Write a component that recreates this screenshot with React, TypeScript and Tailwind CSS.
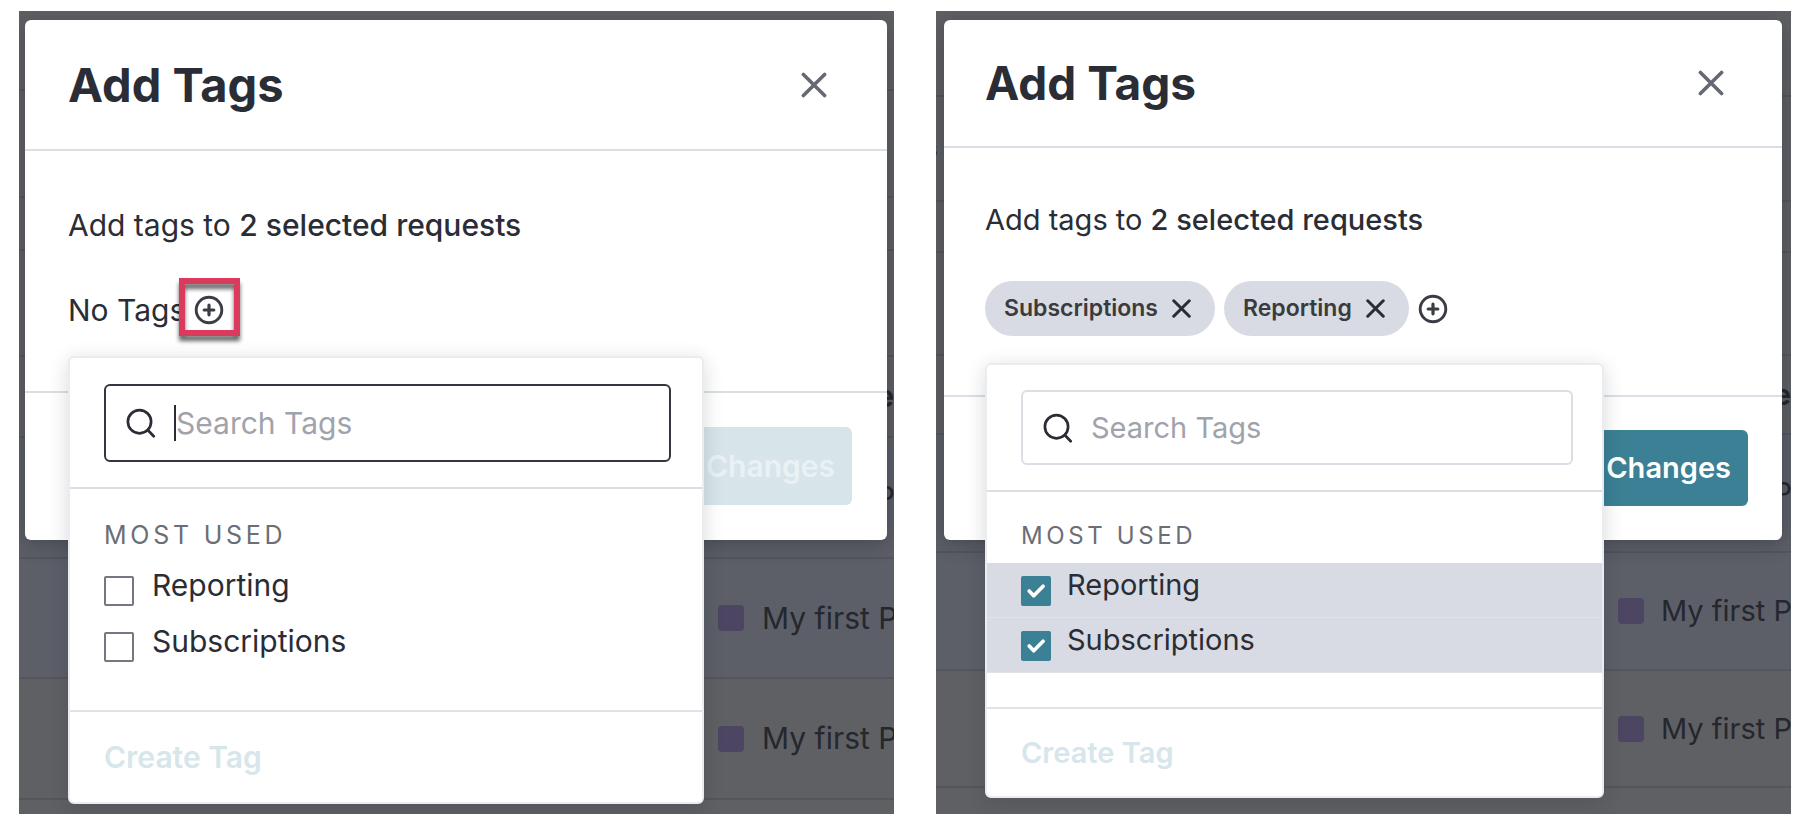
import clsx from "clsx";

type Scale = "large" | "small";

const scales = {
  large: {
    title: "text-[47px] leading-[68px]",
    text: "text-[30px] leading-[45px]",
    label: "mb-2.5 text-[25px] leading-9",
    modal: "mr-[7px] ml-[6px]",
    padX: "px-[43px]",
    header: "h-[131px]",
    body: "gap-[34px] pt-[52px] pb-[53px]",
    tagRow: "h-14",
    footer: "px-[35px] pt-[34px] pb-[35px]",
    button: "h-[78px]",
    popover: "top-[74px] w-[636px]",
    popPad: "pr-[31px] pl-[34px]",
    searchWrap: "pt-[26px] pb-[25px]",
    search: "h-[78px]",
    caret: "ml-[18px]",
    list: "pt-7 pb-[35px]",
    row: "h-14 gap-[18px]",
    create: "h-[90px]",
  },
  small: {
    title: "text-[46px] leading-[66px]",
    text: "text-[29px] leading-[44px]",
    label: "mb-[9px] text-[24px] leading-9",
    modal: "mr-[9px] ml-[8px]",
    padX: "px-[41px]",
    header: "h-[128px]",
    body: "gap-[39px] pt-[50px] pb-[59px]",
    tagRow: "h-[55px]",
    footer: "px-[34px] pt-[33px] pb-[34px]",
    button: "h-[76px]",
    popover: "top-[82px] w-[619px]",
    popPad: "pr-[29px] pl-[34px]",
    searchWrap: "pt-[25px] pb-[25px]",
    search: "h-[75px]",
    caret: "ml-4",
    list: "pt-[26px] pb-[34px]",
    row: "h-[55px] gap-4",
    create: "h-[87px]",
  },
};

function CrossIcon({ size, weight }: { size: number; weight: number }) {
  return (
    <svg width={size} height={size} viewBox="0 0 26 26" fill="none" stroke="currentColor" strokeWidth={weight} strokeLinecap="round" aria-hidden="true">
      <path d="M2.4 2.4 23.6 23.6M23.6 2.4 2.4 23.6" />
    </svg>
  );
}

function PlusCircleIcon() {
  return (
    <svg width="30" height="30" viewBox="0 0 30 30" fill="none" stroke="currentColor" strokeLinecap="round" aria-hidden="true">
      <circle cx="15" cy="15" r="12.8" strokeWidth="2.9" />
      <path d="M15 10.2v9.6M10.2 15h9.6" strokeWidth="3.2" />
    </svg>
  );
}

function SearchIcon() {
  return (
    <svg className="shrink-0" width="30" height="30" viewBox="0 0 30 30" fill="none" stroke="currentColor" strokeWidth="2.7" strokeLinecap="round" aria-hidden="true">
      <circle cx="13.5" cy="13.7" r="11.6" />
      <path d="m22 22.3 5.7 5.9" />
    </svg>
  );
}

function CheckIcon() {
  return (
    <svg className="pointer-events-none col-start-1 row-start-1 hidden peer-checked:block" width="30" height="30" viewBox="0 0 30 30" fill="none" stroke="white" strokeWidth="3.7" strokeLinecap="round" strokeLinejoin="round" aria-hidden="true">
      <path d="m8.2 15 4.5 4.7 9.4-9.5" />
    </svg>
  );
}

function TagOption({ name, checked, scale }: { name: string; checked: boolean; scale: Scale }) {
  const s = scales[scale];
  return (
    <label className={clsx("flex items-start border-b border-transparent bg-clip-padding has-[:checked]:border-[#e0e2e8] has-[:checked]:bg-[#d8dbe3]", s.row, s.popPad)}>
      <span className="mt-[13px] grid">
        <input
          type="checkbox"
          defaultChecked={checked}
          className="peer col-start-1 row-start-1 size-[30px] appearance-none rounded-[2px] border-2 border-[#757881] bg-white checked:border-[#3b8095] checked:bg-[#3b8095]"
        />
        <CheckIcon />
      </span>
      <span className={s.text}>{name}</span>
    </label>
  );
}

function TagPill({ name }: { name: string }) {
  return (
    <span className="flex h-full items-center gap-3.5 rounded-full bg-[#d8dbe3] pr-6 pl-[19px] text-[23px] font-semibold text-[#3b3b3d]">
      {name}
      <button type="button" aria-label={`Remove ${name}`} className="text-[#2a2d35]">
        <CrossIcon size={19} weight={4.2} />
      </button>
    </span>
  );
}

function TagPopover({ scale, selected, focused }: { scale: Scale; selected: string[]; focused: boolean }) {
  const s = scales[scale];
  return (
    <div className={clsx("absolute left-0 z-10 rounded-[6px] border-2 border-[#ebecf1] bg-white shadow-[0_4px_20px_rgba(20,22,30,0.16)]", s.popover)}>
      <div className={clsx("border-b-2 border-[#dbdfe5]", s.searchWrap, s.popPad)}>
        <div className={clsx("flex items-center rounded-[6px] border-2 px-5", s.search, focused ? "border-[#33363e]" : "border-[#dcdee6]")}>
          <SearchIcon />
          <span className={clsx("h-9 w-[2px] shrink-0", s.caret, focused && "bg-[#2a2d35]")} />
          <input
            type="text"
            aria-label="Search Tags"
            placeholder="Search Tags"
            className={clsx("w-full min-w-0 bg-transparent outline-none placeholder:text-[#a0a3ab]", s.text)}
          />
        </div>
      </div>
      <div className={clsx("border-b-2 border-[#dfe2e8]", s.list)}>
        <h3 className={clsx("tracking-[0.15em] text-[#6b6e76] uppercase", s.label, s.popPad)}>Most Used</h3>
        {["Reporting", "Subscriptions"].map((name) => (
          <TagOption key={name} name={name} checked={selected.includes(name)} scale={scale} />
        ))}
      </div>
      <div className={clsx("flex items-center", s.create, s.popPad)}>
        <button type="button" disabled className={clsx("font-semibold text-[#d7e6eb]", s.text)}>Create Tag</button>
      </div>
    </div>
  );
}

interface RequestRow {
  height: string;
  selected?: boolean;
  project?: boolean;
  start?: string;
  end?: string;
}

const largeRows: RequestRow[] = [
  { height: "h-[80px]" },
  { height: "h-[107px]" },
  { height: "h-[53px]" },
  { height: "h-[106px]" },
  { height: "h-[81px]", end: "e" },
  { height: "h-[121px]", selected: true, end: "P" },
  { height: "h-[120px]", selected: true, project: true },
  { height: "h-[121px]", project: true },
  { height: "h-[14px]" },
];

const smallRows: RequestRow[] = [
  { height: "h-[86px]" },
  { height: "h-[105px]", start: "s" },
  { height: "h-[51px]" },
  { height: "h-[103px]" },
  { height: "h-[79px]", end: "e" },
  { height: "h-[118px]", selected: true, end: "P" },
  { height: "h-[118px]", selected: true, project: true },
  { height: "h-[117px]", project: true },
  { height: "h-[26px]" },
];

function RequestList({ rows, scale }: { rows: RequestRow[]; scale: Scale }) {
  const large = scale === "large";
  return (
    <div aria-hidden="true" className="col-start-1 row-start-1 min-w-0 overflow-hidden text-[#25272e]">
      {rows.map((row, i) => (
        <div
          key={i}
          className={clsx(
            "flex items-center overflow-hidden border-b-2 border-[#54565c] whitespace-nowrap last:border-b-0",
            row.height,
            row.selected ? "bg-[#5c5f68]" : "bg-[#5f6064]",
            scales[scale].text,
          )}
        >
          {row.start && <span className="-ml-[11px] text-[23px] font-semibold">{row.start}</span>}
          {row.end && <span className={clsx("ml-auto", row.end === "e" ? "font-bold" : "-mr-px")}>{row.end}</span>}
          {row.project && (
            <span className={clsx("flex items-center", large ? "gap-[18px] pl-[699px]" : "gap-[17px] pl-[682px]")}>
              <span className="size-[26px] rounded-[4px] bg-[#4c4663]" />
              My first Project
            </span>
          )}
        </div>
      ))}
    </div>
  );
}

function Scene({ scale, tags }: { scale: Scale; tags: string[] }) {
  const s = scales[scale];
  const empty = tags.length === 0;
  return (
    <section className="grid min-w-0 items-start overflow-hidden bg-[#5f6064]">
      <RequestList rows={empty ? largeRows : smallRows} scale={scale} />
      <div
        role="dialog"
        aria-label="Add Tags"
        className={clsx("z-10 col-start-1 row-start-1 mt-[9px] rounded-[6px] bg-white shadow-[0_4px_20px_rgba(20,22,30,0.3)]", s.modal)}
      >
        <header className={clsx("flex items-center justify-between border-b-2 border-[#dadfe5]", s.header, s.padX)}>
          <h2 className={clsx("font-bold", s.title)}>Add Tags</h2>
          <button type="button" aria-label="Close" className="mr-[17px] text-[#666971]">
            <CrossIcon size={26} weight={3.6} />
          </button>
        </header>
        <div className={clsx("flex flex-col", s.body, s.padX)}>
          <p className={s.text}>
            Add tags to <span className="font-medium">2 selected requests</span>
          </p>
          <div className={clsx("relative flex items-center", s.tagRow)}>
            {empty ? (
              <>
                <span className={s.text}>No Tags</span>
                <span className="relative ml-[9px] flex">
                  <button type="button" aria-label="Add tag" className="text-[#3a3d45]">
                    <PlusCircleIcon />
                  </button>
                  <span className="pointer-events-none absolute -top-[17px] -right-4 -bottom-[11px] -left-[15px] border-[6px] border-[#da3a5c] drop-shadow-[0_5px_2px_rgba(0,0,0,0.6)]" />
                </span>
              </>
            ) : (
              <div className="flex h-full items-center gap-[9px]">
                {tags.map((tag) => (
                  <TagPill key={tag} name={tag} />
                ))}
                <button type="button" aria-label="Add tag" className="text-[#3a3d45]">
                  <PlusCircleIcon />
                </button>
              </div>
            )}
            <TagPopover scale={scale} selected={tags} focused={empty} />
          </div>
        </div>
        <footer className={clsx("flex justify-end border-t-2 border-[#dadfe5]", s.footer)}>
          <button
            type="button"
            disabled={empty}
            className={clsx("rounded-[6px] px-[17px] font-semibold", s.button, s.text, empty ? "bg-[#d7e5ea] text-[#eaf1f4]" : "bg-[#3b8095] text-white")}
          >
            Save Changes
          </button>
        </footer>
      </div>
    </section>
  );
}

export default function App() {
  return (
    <main className="grid min-h-screen grid-cols-[875fr_855fr] content-start gap-[42px] bg-white pt-[11px] pr-[17px] pb-2.5 pl-[19px] font-['Inter',sans-serif] text-[#2a2d35]">
      <Scene scale="large" tags={[]} />
      <Scene scale="small" tags={["Subscriptions", "Reporting"]} />
    </main>
  );
}
